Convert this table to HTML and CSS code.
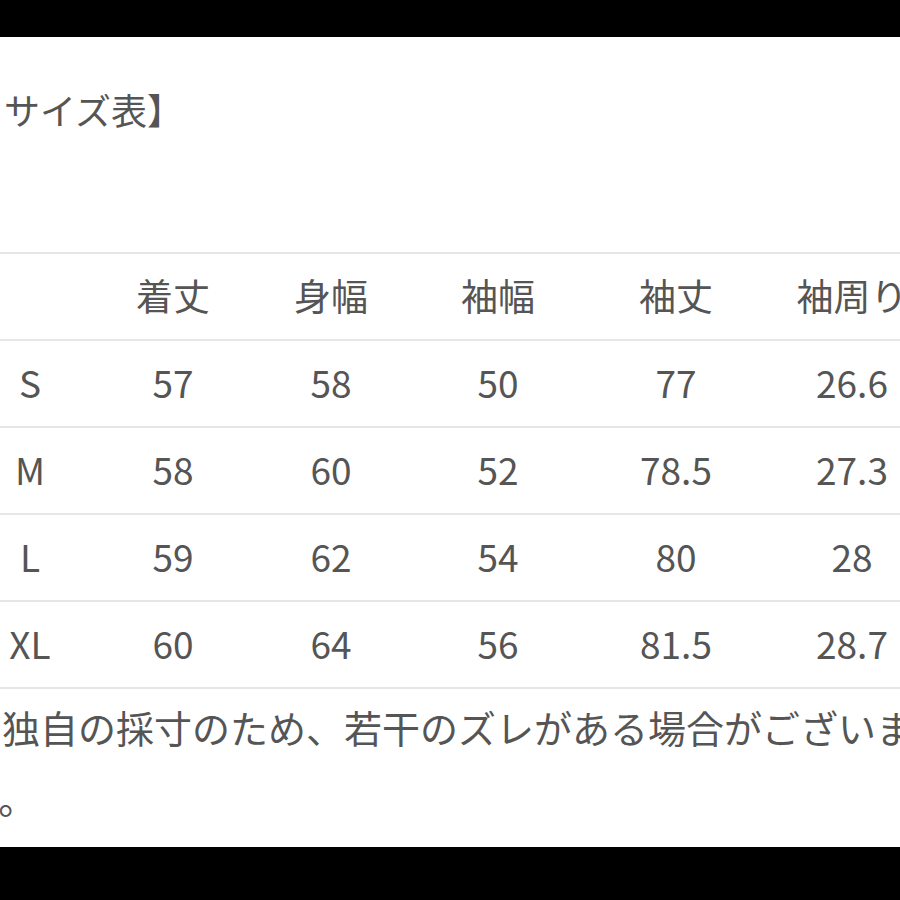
FILE: index.html
```html
<!DOCTYPE html>
<html lang="ja">
<head>
<meta charset="utf-8">
<title>サイズ表</title>
<link rel="stylesheet" href="styles.css">
</head>
<body>
<div class="bar top"></div>
<main class="sheet">
  <div class="content">
    <h1 class="title">サイズ表】</h1>
    <div class="table">
      <div class="row head">
        <div class="cell"></div>
        <div class="cell">着丈</div>
        <div class="cell">身幅</div>
        <div class="cell">袖幅</div>
        <div class="cell">袖丈</div>
        <div class="cell">袖周り</div>
      </div>
      <div class="row">
        <div class="cell">S</div>
        <div class="cell">57</div>
        <div class="cell">58</div>
        <div class="cell">50</div>
        <div class="cell">77</div>
        <div class="cell">26.6</div>
      </div>
      <div class="row">
        <div class="cell">M</div>
        <div class="cell">58</div>
        <div class="cell">60</div>
        <div class="cell">52</div>
        <div class="cell">78.5</div>
        <div class="cell">27.3</div>
      </div>
      <div class="row">
        <div class="cell">L</div>
        <div class="cell">59</div>
        <div class="cell">62</div>
        <div class="cell">54</div>
        <div class="cell">80</div>
        <div class="cell">28</div>
      </div>
      <div class="row last">
        <div class="cell">XL</div>
        <div class="cell">60</div>
        <div class="cell">64</div>
        <div class="cell">56</div>
        <div class="cell">81.5</div>
        <div class="cell">28.7</div>
      </div>
    </div>
    <p class="note">※独自の採寸のため、若干のズレがある場合がございま<br>す。</p>
  </div>
</main>
<div class="bar bottom"></div>
</body>
</html>
```

FILE: styles.css
```css
html, body {
  margin: 0;
  padding: 0;
  background: #000;
}
body {
  width: 900px;
  height: 900px;
  overflow: hidden;
  display: flex;
  flex-direction: column;
  font-family: "Noto Sans CJK JP", "Noto Sans", sans-serif;
  color: #555;
}
.bar.top {
  height: 37px;
  flex: none;
  background: #000;
}
.bar.bottom {
  flex: 1;
  background: #000;
}
.sheet {
  height: 810px;
  flex: none;
  background: #fff;
  overflow: hidden;
}
.content {
  margin-left: -36px;
  width: 1000px;
}
.title {
  margin: 0;
  padding: 46px 0 0 40px;
  font-size: 36px;
  font-weight: 400;
  line-height: 52px;
  height: 215px;
  box-sizing: border-box;
}
.table {
  display: flex;
  flex-direction: column;
}
.row {
  display: grid;
  grid-template-columns: 132px 154px 162px 172px 184px 168px;
  height: 87px;
  box-sizing: border-box;
  border-top: 2px solid #e6e6e6;
  padding-bottom: 4px;
  align-items: center;
  font-size: 37px;
}
.row.last {
  height: 89px;
  border-bottom: 2px solid #e6e6e6;
}
.cell {
  text-align: center;
  white-space: nowrap;
}
.note {
  margin: 0;
  padding-top: 2px;
  font-size: 38px;
  line-height: 71px;
  white-space: nowrap;
}
```
